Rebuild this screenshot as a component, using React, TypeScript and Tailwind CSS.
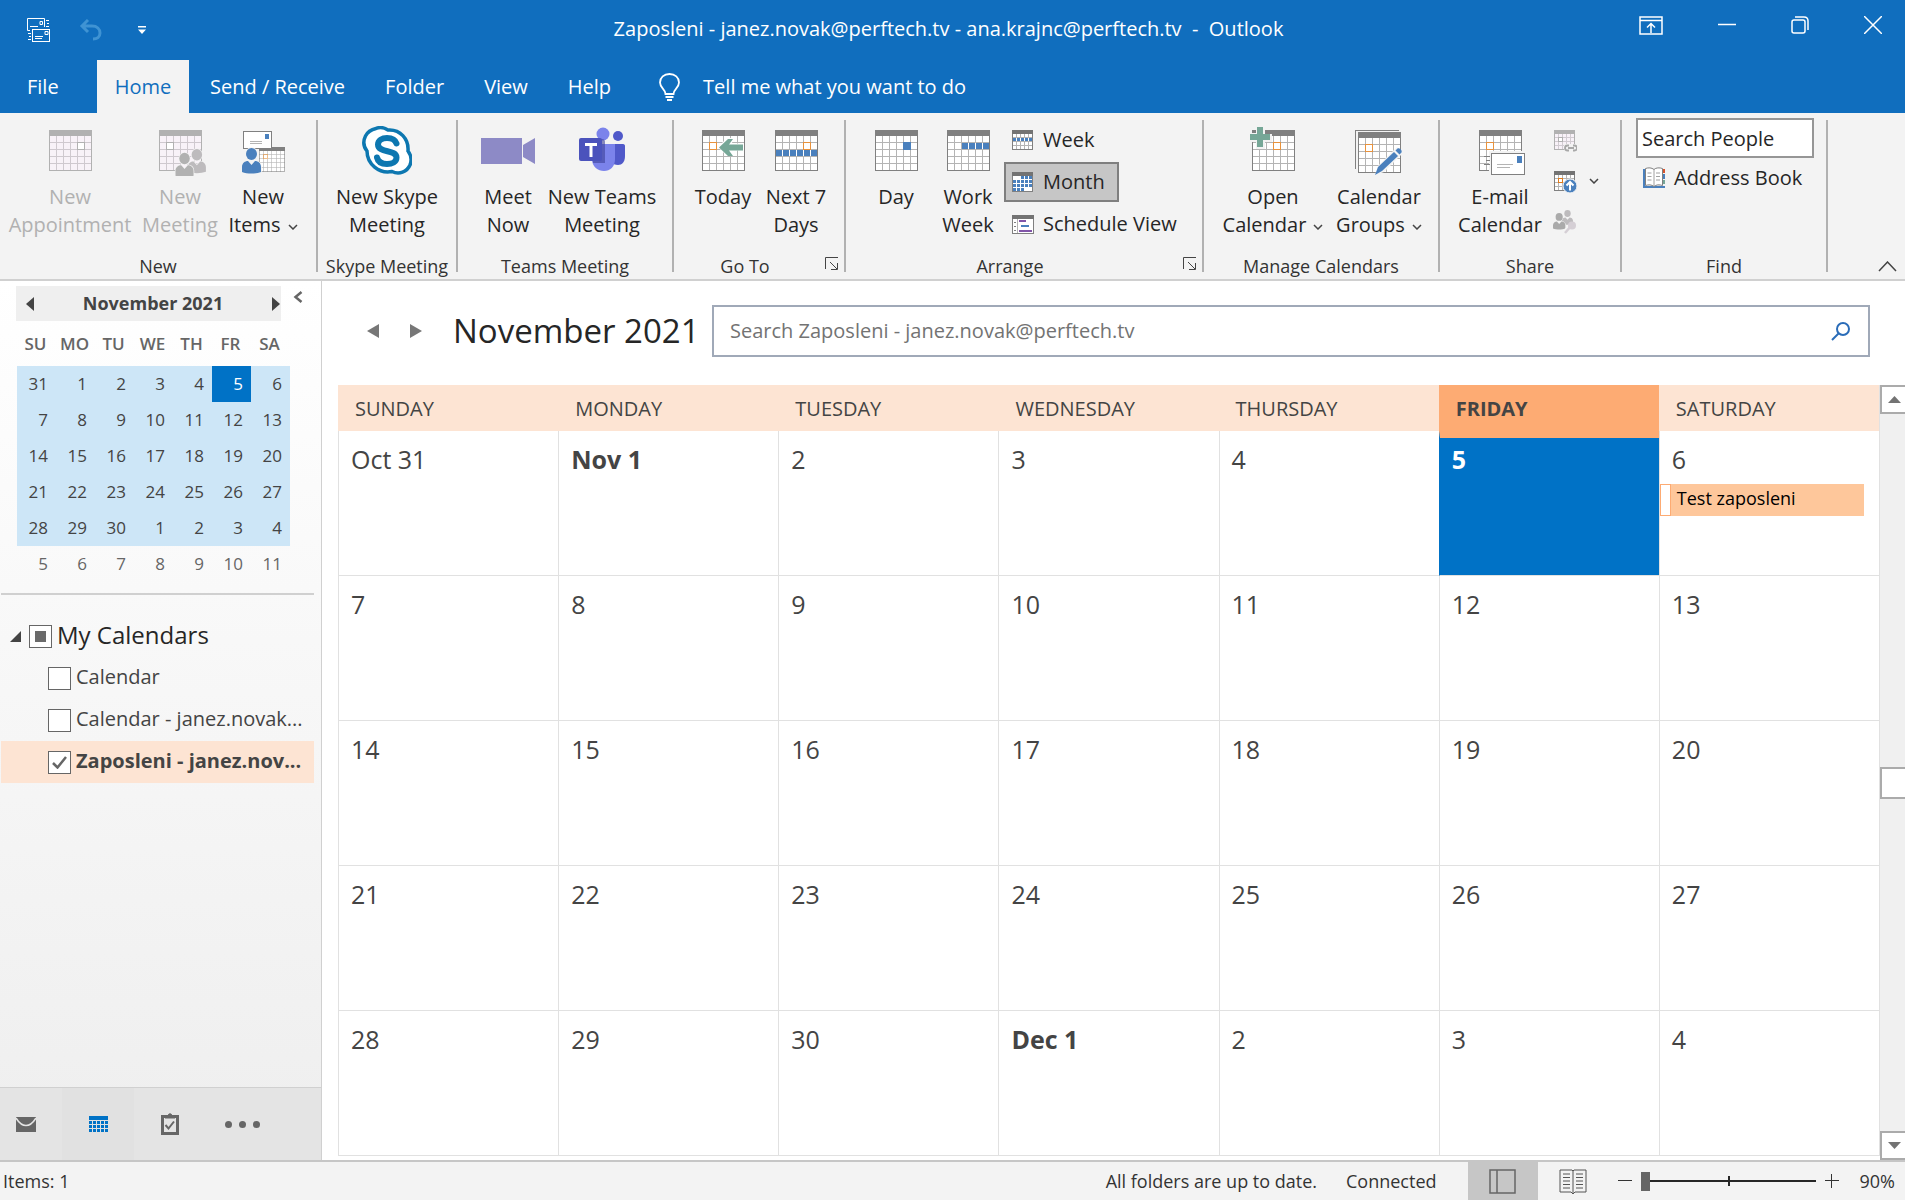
import React from 'react';
import clsx from 'clsx';

const WEEKDAYS = ['SUNDAY', 'MONDAY', 'TUESDAY', 'WEDNESDAY', 'THURSDAY', 'FRIDAY', 'SATURDAY'];
const SHORT_DAYS = ['SU', 'MO', 'TU', 'WE', 'TH', 'FR', 'SA'];

const MONTH = [
  ['Oct 31', 'Nov 1', '2', '3', '4', '5', '6'],
  ['7', '8', '9', '10', '11', '12', '13'],
  ['14', '15', '16', '17', '18', '19', '20'],
  ['21', '22', '23', '24', '25', '26', '27'],
  ['28', '29', '30', 'Dec 1', '2', '3', '4'],
];

const MINI_MONTH = [
  [31, 1, 2, 3, 4, 5, 6],
  [7, 8, 9, 10, 11, 12, 13],
  [14, 15, 16, 17, 18, 19, 20],
  [21, 22, 23, 24, 25, 26, 27],
  [28, 29, 30, 1, 2, 3, 4],
  [5, 6, 7, 8, 9, 10, 11],
];

/* ---------- icons ---------- */

type GridProps = { disabled?: boolean; children?: React.ReactNode };

// Month sheet that most of the ribbon icons are built on
const Sheet: React.FC<GridProps> = ({ disabled, children }) => (
  <g shapeRendering="crispEdges">
    <rect width="43" height="41" fill={disabled ? '#f8f2f8' : '#fff'} />
    <path
      d="M7.5 6v35M14.5 6v35M21.5 6v35M28.5 6v35M35.5 6v35M0 12.5h43M0 19.5h43M0 26.5h43M0 33.5h43"
      stroke={disabled ? '#cfc9cf' : '#b4b4b4'}
      fill="none"
    />
    <rect x=".5" y=".5" width="42" height="40" fill="none" stroke={disabled ? '#b1b1b1' : '#808080'} />
    <rect width="43" height="6" fill={disabled ? '#b1b1b1' : '#808080'} />
    {children}
  </g>
);

const Marker: React.FC<{ x: number; y?: number; color?: string }> = ({ x, y = 12, color = '#e8923c' }) => (
  <rect x={x + 0.5} y={y + 0.5} width="7" height="7" fill="#fff" stroke={color} />
);

// Row of highlighted day cells, separated by white gaps
const DayCells: React.FC<{ x: number; y: number; count: number; size: number }> = ({ x, y, count, size }) => (
  <g>
    <rect x={x} y={y} width={count * (size + 1) - 1} height={size} fill="#fff" />
    {Array.from({ length: count }, (_, i) => (
      <rect key={i} x={x + i * (size + 1)} y={y} width={size} height={size} fill="#4a80bd" />
    ))}
  </g>
);

const BigIcon: React.FC<{ children: React.ReactNode }> = ({ children }) => (
  <svg width="57" height="50" viewBox="-7 -4 57 50" aria-hidden="true">
    {children}
  </svg>
);

const SmallIcon: React.FC<{ children: React.ReactNode }> = ({ children }) => (
  <svg width="24" height="24" viewBox="0 0 24 24" aria-hidden="true" className="shrink-0">
    {children}
  </svg>
);

const SmallSheet: React.FC<GridProps> = ({ disabled, children }) => (
  <g shapeRendering="crispEdges">
    <rect x="1" y="2" width="21" height="20" fill={disabled ? '#f8f2f8' : '#fff'} />
    <path
      d="M5.5 6v16M9.5 6v16M13.5 6v16M17.5 6v16M1 9.5h21M1 13.5h21M1 17.5h21"
      stroke={disabled ? '#d2ccd2' : '#b4b4b4'}
      fill="none"
    />
    <rect x="1.5" y="2.5" width="20" height="19" fill="none" stroke={disabled ? '#b1b1b1' : '#808080'} />
    <rect x="1" y="2" width="21" height="4" fill={disabled ? '#b1b1b1' : '#737373'} />
    {children}
  </g>
);

const Person: React.FC<{ x: number; y: number; color: string; outline?: string }> = ({ x, y, color, outline = '#f3f3f3' }) => (
  <g transform={`translate(${x} ${y})`} fill={color} stroke={outline} strokeWidth="1.5" paintOrder="stroke">
    <path d="M0 24v-5c0-4 3-6 6-6l3.500 4 3.500-4c3 0 6 2 6 6v5c-5 2-14 2-19 0z" />
    <ellipse cx="9.500" cy="6" rx="5.500" ry="6" />
  </g>
);

const Chevron: React.FC = () => (
  <svg width="10" height="6" viewBox="0 0 10 6" className="inline-block" aria-hidden="true">
    <path d="M1 1l4 4 4-4" fill="none" stroke="#444" strokeWidth="1.500" />
  </svg>
);

const AppointmentIcon = () => (
  <BigIcon>
    <Sheet disabled>
      <Marker x={28} color="#b1b1b1" />
    </Sheet>
  </BigIcon>
);

const MeetingIcon = () => (
  <BigIcon>
    <Sheet disabled>
      <Marker x={7} color="#b1b1b1" />
    </Sheet>
    <g transform="translate(26 20) scale(.95)">
      <Person x={3} y={-1} color="#bdbbbd" />
      <Person x={-10} y={3} color="#b1b1b1" />
    </g>
  </BigIcon>
);

const NewItemsIcon = () => (
  <BigIcon>
    <g transform="translate(17 17) scale(.6)">
      <Sheet>
        <Marker x={7} />
      </Sheet>
    </g>
    <rect x="1.500" y="1.500" width="28" height="17" fill="#fff" stroke="#808080" />
    <rect x="23" y="4" width="4" height="5" fill="#4a80bd" />
    <path d="M8 11.500h12M8 13.500h12" stroke="#b4b4b4" />
    <Person x={0} y={18} color="#4a80bd" />
  </BigIcon>
);

const SkypeIcon = () => (
  <svg width="50" height="50" viewBox="0 0 50 50" aria-hidden="true">
    <path
      d="M14 2.500C19 .5 23 2 26 4c12-1 21 9 20 21 3 4 4 9 2 14-3 7-11 10-18 6.500C17 48 5 38 5 25 1 20 1 15 3.500 10 5.500 6 9.500 3.500 14 2.500z"
      fill="#fff"
      stroke="#0d77b0"
      strokeWidth="3.500"
    />
    <path
      d="M34.500 17.500C33 13 29 12 25 12c-5 0-9 2.200-9 6.500 0 9 18.500 4.500 18.500 13 0 4.500-4.500 6.500-9.500 6.500s-9-2-10-6.500"
      fill="none"
      stroke="#0d77b0"
      strokeWidth="6"
      strokeLinecap="round"
    />
  </svg>
);

const MeetNowIcon = () => (
  <svg width="56" height="50" viewBox="0 0 56 50" aria-hidden="true">
    <path d="M1 12h41v26H1zM43 19l12-7v26l-12-7z" fill="#8d8ac6" />
  </svg>
);

const TeamsIcon = () => (
  <svg width="48" height="50" viewBox="0 0 48 50" aria-hidden="true">
    <circle cx="40" cy="10" r="5" fill="#5059c9" />
    <path d="M33 18h12c1.500 0 2 1 2 2v10c0 6-3 9-7 9-3 0-5-1-7-3z" fill="#5059c9" />
    <circle cx="25" cy="8" r="6.500" fill="#7b83eb" />
    <path d="M15 18h22v15c0 8-5 12-11 12S14 41 14 33z" fill="#7b83eb" />
    <path d="M14 13h10c2 0 3 1 3 3v21H15z" fill="#3c4198" opacity=".6" />
    <rect x="1" y="12" width="23" height="23" rx="2" fill="#4b53bc" />
    <path d="M7 18.500h12M13 18v13" stroke="#fff" strokeWidth="3" />
  </svg>
);

const TodayIcon = () => (
  <BigIcon>
    <Sheet>
      <Marker x={7} />
    </Sheet>
    <path d="M42 13.500H29.500L33 8h-8l-9 9 9 9h8l-3.500-5.500H42z" fill="#fff" />
    <path d="M41 14.500H27L31 9h-5l-9 8.500 9 8.500h5l-4-5.500h14z" fill="#76a797" />
  </BigIcon>
);

const NextSevenIcon = () => (
  <BigIcon>
    <Sheet>
      <Marker x={28} />
      <DayCells x={1} y={20} count={6} size={6} />
    </Sheet>
  </BigIcon>
);

const DayIcon = () => (
  <BigIcon>
    <Sheet>
      <rect x="28" y="12" width="8" height="8" fill="#4a80bd" />
    </Sheet>
  </BigIcon>
);

const WorkWeekIcon = () => (
  <BigIcon>
    <Sheet>
      <DayCells x={15} y={13} count={4} size={6} />
    </Sheet>
  </BigIcon>
);

const OpenCalendarIcon = () => (
  <BigIcon>
    <Sheet>
      <Marker x={21} />
    </Sheet>
    <path d="M4-4h9v8h7v8h-7v7H4v-7h-8V3h8z" fill="#f3f3f3" />
    <path d="M5-3h6v7h7v6h-7v7H5v-7H-2V4h7z" fill="#76a797" />
  </BigIcon>
);

const CalendarGroupsIcon = () => (
  <BigIcon>
    <path d="M-2.500 39V.5H41" fill="none" stroke="#808080" shapeRendering="crispEdges" />
    <g transform="translate(0 2)">
      <Sheet>
        <Marker x={7} />
      </Sheet>
    </g>
    <path d="M17 45l3-9 19-19 6 6-19 19z" fill="#f3f3f3" />
    <path d="M17 45l3-8 16-15 4 4-16 15zM37.500 20.500l2-2c2-1 5 2 4 4l-2 2z" fill="#4a80bd" />
  </BigIcon>
);

const EmailCalendarIcon = () => (
  <BigIcon>
    <Sheet>
      <Marker x={7} />
    </Sheet>
    <g shapeRendering="crispEdges">
      <rect x="10" y="21" width="37" height="25" fill="#f3f3f3" />
      <rect x="12.500" y="23.500" width="33" height="21" fill="#fff" stroke="#808080" />
      <rect x="38" y="26" width="5" height="7" fill="#4a80bd" />
      <path d="M18 34.500h16M18 37.500h13" stroke="#b4b4b4" />
      <path d="M5 26.500h6M7 30.500h4M5 34.500h6" stroke="#808080" />
    </g>
  </BigIcon>
);

const WeekIcon = () => (
  <SmallIcon>
    <SmallSheet>
      <DayCells x={2} y={10} count={5} size={3} />
    </SmallSheet>
  </SmallIcon>
);

const MonthIcon = () => (
  <SmallIcon>
    <SmallSheet>
      <rect x="2" y="6" width="19" height="15" fill="#fff" />
      <DayCells x={10} y={6} count={3} size={3} />
      <DayCells x={2} y={10} count={5} size={3} />
      <DayCells x={2} y={14} count={5} size={3} />
      <DayCells x={2} y={18} count={3} size={3} />
    </SmallSheet>
  </SmallIcon>
);

const ScheduleIcon = () => (
  <SmallIcon>
    <g shapeRendering="crispEdges">
      <rect x="1.500" y="3.500" width="21" height="18" fill="#fff" stroke="#808080" />
      <rect x="1" y="3" width="22" height="4" fill="#737373" />
      <path d="M6.500 7v14" stroke="#b4b4b4" />
      <path d="M3 10.500h2M3 14.500h2M3 18.500h2" stroke="#808080" />
      <path d="M8 9h7M8 19h13" stroke="#8155a8" strokeWidth="2" />
      <path d="M10 14h8" stroke="#4a80bd" strokeWidth="2" />
    </g>
  </SmallIcon>
);

const ShareCalendarIcon = () => (
  <SmallIcon>
    <SmallSheet disabled>
      <rect x="5.500" y="9.500" width="4" height="4" fill="#fff" stroke="#b1b1b1" />
    </SmallSheet>
    <path d="M11 16h13v8H11z" fill="#f3f3f3" />
    <path d="M16 17.500h-1.500a2.500 2.500 0 000 5H16M20 17.500h1.500a2.500 2.500 0 010 5H20M15 20h6" fill="none" stroke="#a8a8a8" strokeWidth="1.800" />
  </SmallIcon>
);

const PublishIcon = () => (
  <SmallIcon>
    <SmallSheet>
      <rect x="5.500" y="9.500" width="4" height="4" fill="#fff" stroke="#e07b1c" />
    </SmallSheet>
    <circle cx="17" cy="17" r="7" fill="#4a80bd" stroke="#f3f3f3" />
    <path d="M17 21.500v-8M13.500 16.500L17 13l3.500 3.500" fill="none" stroke="#fff" strokeWidth="2" />
  </SmallIcon>
);

const PermissionsIcon = () => (
  <SmallIcon>
    <g transform="translate(9 0) scale(.58)">
      <Person x={0} y={0} color="#bdbbbd" />
    </g>
    <g transform="translate(0 3) scale(.65)">
      <Person x={0} y={0} color="#aaa" />
    </g>
    <path d="M18 16l-7 7" stroke="#f3f3f3" strokeWidth="5" />
    <circle cx="19" cy="15.500" r="4" fill="#d5cfd5" />
    <path d="M18 16l-6 7" stroke="#d5cfd5" strokeWidth="2.500" />
  </SmallIcon>
);

const AddressBookIcon = () => (
  <SmallIcon>
    <path d="M1 3h2v17h20v2H1z" fill="#4a80bd" />
    <path d="M3.500 2.500c3-1 6-1 8.500 1 2-2 5.500-2 8.500-1v17c-3-1-6.500-1-8.500 1-2.500-2-5.500-2-8.500-1z" fill="#fff" stroke="#808080" />
    <path d="M12 3v17M5.500 7h4M5.500 10.500h4M5.500 14h4M14 7h4M14 10.500h4M14 14h4" stroke="#a0a0a0" />
    <path d="M22 3v4" stroke="#d6532d" strokeWidth="2" />
    <path d="M22 8v5" stroke="#4a80bd" strokeWidth="2" />
    <path d="M22 14v4" stroke="#76a797" strokeWidth="2" />
  </SmallIcon>
);

const Triangle: React.FC<{ dir: 'left' | 'right'; small?: boolean; color: string }> = ({ dir, small, color }) => (
  <svg width={small ? 8 : 12} height="14" viewBox="0 0 12 14" preserveAspectRatio="none" aria-hidden="true">
    <path d={dir === 'left' ? 'M12 0v14L0 7z' : 'M0 0v14l12-7z'} fill={color} />
  </svg>
);

/* ---------- ribbon ---------- */

type BigButtonProps = {
  icon: React.ReactNode;
  lines: string[];
  width: string;
  menu?: boolean;
  disabled?: boolean;
};

const BigButton: React.FC<BigButtonProps> = ({ icon, lines, width, menu, disabled }) => (
  <button
    type="button"
    disabled={disabled}
    className={clsx('flex shrink-0 flex-col items-center pt-[6px]', width, disabled ? 'text-[#b1b1b1]' : 'text-[#262626]')}
  >
    {icon}
    <span className="mt-[7px] text-[20px] leading-7 whitespace-nowrap">
      {lines[0]}
      {lines[1] && <br />}
      {lines[1]}
      {menu && (
        <span className="mb-1 ml-[7px] inline-block align-baseline leading-none">
          <Chevron />
        </span>
      )}
    </span>
  </button>
);

type GroupProps = { label: string; width: string; launcher?: boolean; children: React.ReactNode };

const Group: React.FC<GroupProps> = ({ label, width, launcher, children }) => (
  <section className={clsx('relative flex shrink-0 flex-col border-r-2 border-[#b1b1b1]', width)} aria-label={label}>
    <div className="flex flex-1">{children}</div>
    <div className={clsx('-mb-1 text-center text-[18px] leading-5 whitespace-nowrap text-[#333]', launcher && 'pr-7')}>
      {label}
    </div>
    {launcher && (
      <button type="button" aria-label={`${label} options`} className="absolute right-[5px] bottom-px">
        <svg width="14" height="14" viewBox="0 0 14 14" fill="none" stroke="#444">
          <path d="M.5 12V.5H13M5 5l7 7M12.500 6v6.500H6" />
        </svg>
      </button>
    )}
  </section>
);

const SmallButton: React.FC<{ icon: React.ReactNode; label: string; active?: boolean }> = ({ icon, label, active }) => (
  <button
    type="button"
    aria-pressed={active}
    className={clsx(
      'flex h-10 items-center gap-2 border-2 px-[5px] pr-3 text-[20px] whitespace-nowrap text-[#262626]',
      active ? 'border-[#7f7f7f] bg-[#c6c6c6]' : 'border-transparent'
    )}
  >
    {icon}
    {label}
  </button>
);

const Ribbon: React.FC = () => (
  <div className="flex h-[168px] shrink-0 border-b-2 border-[#d0d0d0] bg-[#f3f3f3] pt-[7px] pb-[7px]">
    <Group label="New" width="w-[318px]">
      <BigButton icon={<AppointmentIcon />} lines={['New', 'Appointment']} width="w-[140px]" disabled />
      <BigButton icon={<MeetingIcon />} lines={['New', 'Meeting']} width="w-[80px]" disabled />
      <BigButton icon={<NewItemsIcon />} lines={['New', 'Items']} width="w-[86px]" menu />
    </Group>
    <Group label="Skype Meeting" width="w-[140px]">
      <BigButton icon={<SkypeIcon />} lines={['New Skype', 'Meeting']} width="w-[138px]" />
    </Group>
    <Group label="Teams Meeting" width="w-[216px]">
      <div className="flex pl-2">
        <BigButton icon={<MeetNowIcon />} lines={['Meet', 'Now']} width="w-[84px]" />
        <BigButton icon={<TeamsIcon />} lines={['New Teams', 'Meeting']} width="w-[104px]" />
      </div>
    </Group>
    <Group label="Go To" width="w-[172px]" launcher>
      <div className="flex pl-3">
        <BigButton icon={<TodayIcon />} lines={['Today']} width="w-[74px]" />
        <BigButton icon={<NextSevenIcon />} lines={['Next 7', 'Days']} width="w-[72px]" />
      </div>
    </Group>
    <Group label="Arrange" width="w-[358px]" launcher>
      <div className="flex pl-[14px]">
        <BigButton icon={<DayIcon />} lines={['Day']} width="w-[72px]" />
        <BigButton icon={<WorkWeekIcon />} lines={['Work', 'Week']} width="w-[72px]" />
        <div className="flex flex-col items-start gap-[2px]">
          <SmallButton icon={<WeekIcon />} label="Week" />
          <SmallButton icon={<MonthIcon />} label="Month" active />
          <SmallButton icon={<ScheduleIcon />} label="Schedule View" />
        </div>
      </div>
    </Group>
    <Group label="Manage Calendars" width="w-[236px]">
      <div className="flex pl-4">
        <BigButton icon={<OpenCalendarIcon />} lines={['Open', 'Calendar']} width="w-[106px]" menu />
        <BigButton icon={<CalendarGroupsIcon />} lines={['Calendar', 'Groups']} width="w-[106px]" menu />
      </div>
    </Group>
    <Group label="Share" width="w-[182px]">
      <div className="flex pl-[10px]">
        <BigButton icon={<EmailCalendarIcon />} lines={['E-mail', 'Calendar']} width="w-[100px]" />
        <div className="flex flex-col items-start pl-[3px]">
          <button type="button" disabled aria-label="Share Calendar" className="flex h-10 items-center">
            <ShareCalendarIcon />
          </button>
          <button type="button" aria-label="Publish Online" className="flex h-[42px] items-center gap-3">
            <PublishIcon />
            <Chevron />
          </button>
          <button type="button" disabled aria-label="Calendar Permissions" className="flex h-10 items-center">
            <PermissionsIcon />
          </button>
        </div>
      </div>
    </Group>
    <Group label="Find" width="w-[206px]">
      <div className="flex flex-1 flex-col pr-3 pl-[14px]">
        <input
          type="text"
          aria-label="Search People"
          placeholder="Search People"
          className="-mt-[2px] h-10 w-full border-2 border-[#969696] bg-white px-1 text-[20px] text-[#262626] placeholder:text-[#262626]"
        />
        <button type="button" className="flex h-10 items-center gap-2 pl-[6px] text-[20px] whitespace-nowrap text-[#262626]">
          <AddressBookIcon />
          Address Book
        </button>
      </div>
    </Group>
    <div className="flex flex-1 items-end justify-end pr-2">
      <button type="button" aria-label="Collapse the ribbon">
        <svg width="19" height="11" viewBox="0 0 19 11" fill="none" stroke="#444" strokeWidth="1.500">
          <path d="M1 10l8.500-9 8.500 9" />
        </svg>
      </button>
    </div>
  </div>
);

/* ---------- title bar and tabs ---------- */

const TitleBar: React.FC = () => (
  <div className="grid h-[60px] shrink-0 grid-cols-[1fr_auto_1fr] text-white">
    <div className="flex items-center pl-[27px]">
      <button type="button" aria-label="Send/Receive All Folders">
        <svg width="24" height="24" viewBox="0 0 24 24" fill="none" stroke="#fff">
          <path d="M3 12.500H.500V.500H17.500V9M13 3.500h2.500v3H13zM3 8.500h8" />
          <rect x="5.500" y="11.500" width="17" height="12" />
          <path d="M18 13.500h3v3h-3zM8 18.500h8M8 20.500h7M19 2.500h3M20 5.500h2M19 8.500h3M1 15.500h3M2 18.500h2M1 21.500h3" />
        </svg>
      </button>
      <button type="button" aria-label="Undo" disabled className="ml-7">
        <svg width="23" height="22" viewBox="0 0 23 22" fill="none" stroke="#3f93d3" strokeWidth="3">
          <path d="M9 1L3 7l6 6M3 7h10c5 0 8 3 8 7s-3 6-7 6" />
        </svg>
      </button>
      <button type="button" aria-label="Customize Quick Access Toolbar" className="ml-9">
        <svg width="8" height="8" viewBox="0 0 8 8" fill="#fff">
          <path d="M0 0h8v1.500H0zM0 3.500h8L4 8z" />
        </svg>
      </button>
    </div>
    <h1 className="self-center pr-2 pb-[3px] text-[20px] whitespace-pre">
      {'Zaposleni - janez.novak@perftech.tv - ana.krajnc@perftech.tv  -  Outlook'}
    </h1>
    <div className="flex items-center justify-end gap-[55px] pr-[23px] pb-[10px]">
      <button type="button" aria-label="Ribbon Display Options">
        <svg width="24" height="19" viewBox="0 0 24 19" fill="none" stroke="#fff" strokeWidth="1.500">
          <path d="M1 1h22v17H1zM1 4.500h22M12 17V8M8 11.500L12 7.500l4 4" />
        </svg>
      </button>
      <button type="button" aria-label="Minimize">
        <svg width="18" height="18" viewBox="0 0 18 18" stroke="#fff" strokeWidth="1.500">
          <path d="M0 8.500h18" />
        </svg>
      </button>
      <button type="button" aria-label="Restore">
        <svg width="18" height="18" viewBox="0 0 18 18" fill="none" stroke="#fff" strokeWidth="1.500">
          <rect x="1" y="4" width="13" height="13" rx="2" />
          <path d="M4 1h9c3 0 4 1 4 4v9" />
        </svg>
      </button>
      <button type="button" aria-label="Close">
        <svg width="18" height="18" viewBox="0 0 18 18" stroke="#fff" strokeWidth="1.500">
          <path d="M0 0l18 18M18 0L0 18" />
        </svg>
      </button>
    </div>
  </div>
);

const Tabs: React.FC = () => (
  <nav className="flex h-[53px] shrink-0 items-stretch text-[20px] text-white">
    <button type="button" className="w-[97px] pl-[27px] text-left">File</button>
    <button type="button" aria-current="page" className="w-[92px] bg-[#f3f3f3] text-[#106ebe]">Home</button>
    <button type="button" className="pr-5 pl-[21px]">Send / Receive</button>
    <button type="button" className="px-5">Folder</button>
    <button type="button" className="px-5">View</button>
    <button type="button" className="px-5">Help</button>
    <button type="button" className="flex items-center gap-[23px] pl-7">
      <svg width="21" height="28" viewBox="0 0 21 28" fill="none" stroke="#fff" strokeWidth="1.800">
        <path d="M6.500 21c0-5-5.500-6-5.500-11.500C1 4.500 5 1 10.500 1S20 4.500 20 9.500C20 15 14.500 16 14.500 21zM6.500 24h8M8 27h5" />
      </svg>
      Tell me what you want to do
    </button>
  </nav>
);

/* ---------- side pane ---------- */

const MiniCalendar: React.FC = () => (
  <div className="pt-[5px] pl-4">
    <div className="flex">
      <div className="flex h-[35px] w-[265px] items-center justify-between bg-[#efefef] pr-px pl-[10px]">
        <button type="button" aria-label="Previous month">
          <Triangle dir="left" small color="#444" />
        </button>
        <span className="text-[18px] font-bold text-[#444]">November 2021</span>
        <button type="button" aria-label="Next month">
          <Triangle dir="right" small color="#444" />
        </button>
      </div>
      <button type="button" aria-label="Minimize the folder pane" className="ml-3 self-start pt-[5px]">
        <svg width="10" height="12" viewBox="0 0 10 12" fill="none" stroke="#666" strokeWidth="2.500">
          <path d="M8.500 1l-6 5 6 5" />
        </svg>
      </button>
    </div>
    <table className="ml-px w-[273px] table-fixed border-separate border-spacing-0 text-right text-[17px] text-[#444]">
      <thead>
        <tr className="h-[45px]">
          {SHORT_DAYS.map((day) => (
            <th key={day} className="p-0 pr-[2px] text-center font-semibold text-[#666]">{day}</th>
          ))}
        </tr>
      </thead>
      <tbody>
        {MINI_MONTH.map((week, row) => (
          <tr key={row} className={clsx('h-9', row < 5 ? 'bg-[#cde6f7]' : 'text-[#666]')}>
            {week.map((day, col) => (
              <td key={col} className={clsx('p-0 pr-2', row === 0 && day === 5 && 'bg-[#0072c6] text-white')}>
                {day}
              </td>
            ))}
          </tr>
        ))}
      </tbody>
    </table>
  </div>
);

const CALENDARS = [
  { id: 'cal', name: 'Calendar', checked: false },
  { id: 'cal-janez', name: 'Calendar - janez.novak...', checked: false },
  { id: 'zaposleni', name: 'Zaposleni - janez.nov...', checked: true },
];

const CheckBox: React.FC<{ id: string; checked?: boolean; mixed?: boolean }> = ({ id, checked, mixed }) => (
  <span className="relative flex size-[23px] shrink-0">
    <input
      id={id}
      type="checkbox"
      defaultChecked={checked}
      className="size-[23px] appearance-none border border-[#666] bg-white"
    />
    {checked && (
      <svg width="15" height="13" viewBox="0 0 15 13" className="pointer-events-none absolute top-[5px] left-1">
        <path d="M1 7l4.500 4.500L14 1" fill="none" stroke="#666" strokeWidth="2.500" />
      </svg>
    )}
    {mixed && <span className="pointer-events-none absolute inset-[6px] bg-[#6a6a6a]" />}
  </span>
);

const CalendarList: React.FC = () => (
  <div className="mr-[7px] ml-px border-t-2 border-[#d0d0d0] pt-5">
    <div className="flex h-[42px] items-center pl-[9px]">
      <svg width="11" height="11" viewBox="0 0 11 11" aria-hidden="true">
        <path d="M11 0v11H0z" fill="#444" />
      </svg>
      <span className="ml-2">
        <CheckBox id="my-calendars" mixed />
      </span>
      <label htmlFor="my-calendars" className="ml-[5px] pb-[2px] text-[24px] text-[#262626]">My Calendars</label>
    </div>
    {CALENDARS.map((cal) => (
      <div key={cal.id} className={clsx('flex h-[42px] items-center pl-[47px]', cal.checked && 'bg-[#fde4d3] font-bold')}>
        <CheckBox id={cal.id} checked={cal.checked} />
        <label htmlFor={cal.id} className="ml-[5px] pb-[2px] text-[20px] whitespace-nowrap text-[#444]">{cal.name}</label>
      </div>
    ))}
  </div>
);

const NavBar: React.FC = () => (
  <nav className="mt-auto flex h-[73px] border-t border-[#d0d0d0] bg-[#e4e4e4]">
    <button type="button" aria-label="Mail" className="flex w-[62px] items-center pl-4">
      <svg width="20" height="15" viewBox="0 0 20 15">
        <rect width="20" height="15" fill="#666" />
        <path d="M0 1c6 10 14 10 20 0" fill="none" stroke="#e4e4e4" strokeWidth="1.500" />
      </svg>
    </button>
    <button type="button" aria-label="Calendar" className="flex w-[72px] items-center justify-center bg-[#e1e1e1]">
      <svg width="19" height="16" viewBox="0 0 19 16" shapeRendering="crispEdges">
        <rect width="19" height="4" fill="#0072c6" />
        <path d="M0 6.500h19M0 10.500h19M0 14.500h19" stroke="#0072c6" strokeWidth="3" strokeDasharray="3 1" />
      </svg>
    </button>
    <button type="button" aria-label="Tasks" className="flex w-[72px] items-center justify-center">
      <svg width="18" height="22" viewBox="0 0 18 22" fill="none" stroke="#666">
        <rect x="1.500" y="3.500" width="15" height="17" strokeWidth="3" />
        <path d="M4 5V3h3c0-3 4-3 4 0h3v2z" fill="#666" />
        <path d="M4.500 12l3 3.500 5.500-7" strokeWidth="2" />
      </svg>
    </button>
    <button type="button" aria-label="More" className="flex w-[72px] items-center justify-center gap-[7px]">
      <span className="size-[7px] rounded-full bg-[#666]" />
      <span className="size-[7px] rounded-full bg-[#666]" />
      <span className="size-[7px] rounded-full bg-[#666]" />
    </button>
  </nav>
);

/* ---------- month view ---------- */

const MonthView: React.FC = () => (
  <table className="h-full w-full table-fixed border-separate border-spacing-0 border-r border-[#e1e1e1] text-left text-[#444]">
    <thead>
      <tr className="h-[46px]">
        {WEEKDAYS.map((day) => (
          <th
            key={day}
            className={clsx('p-0 pt-[2px] pl-[17px] text-[20px]', day === 'FRIDAY' ? 'bg-[#fdab73] font-bold' : 'bg-[#fde4d3] font-normal')}
          >
            {day}
          </th>
        ))}
      </tr>
    </thead>
    <tbody>
      {MONTH.map((week, row) => (
        <tr key={row} className="h-1/5">
          {week.map((day, col) => {
            const today = row === 0 && day === '5';
            return (
              <td
                key={col}
                className={clsx(
                  'border-b border-l border-[#e1e1e1] p-0 align-top',
                  today && 'border-t-[7px] border-t-[#fdab73] border-l-[#0072c6] bg-[#0072c6] text-white'
                )}
              >
                <div
                  className={clsx(
                    'pl-3 text-[25px] leading-8',
                    today ? 'pt-[5px]' : 'pt-3',
                    (today || day.length > 2) && day !== 'Oct 31' && 'font-bold'
                  )}
                >
                  {day}
                </div>
                {row === 0 && day === '6' && (
                  <button type="button" className="mt-[9px] flex h-8 w-[calc(100%-15px)] bg-[#fec79b] text-left text-[18px] leading-7 text-black">
                    <span className="h-full w-[11px] border border-[#fdab73] bg-white" />
                    <span className="pl-[6px]">Test zaposleni</span>
                  </button>
                )}
              </td>
            );
          })}
        </tr>
      ))}
    </tbody>
  </table>
);

const ScrollBar: React.FC = () => (
  <div className="flex w-[25px] shrink-0 flex-col justify-between overflow-hidden bg-[#f0f0f0]">
    <button type="button" aria-label="Scroll up" className="flex h-[29px] w-7 items-center justify-center border-2 border-[#ababab] bg-white">
      <svg width="13" height="7" viewBox="0 0 13 7">
        <path d="M0 7l6.500-7L13 7z" fill="#737373" />
      </svg>
    </button>
    <div className="mt-5 h-8 w-7 border-2 border-[#ababab] bg-white" />
    <button type="button" aria-label="Scroll down" className="flex h-[29px] w-7 items-center justify-center border-2 border-[#ababab] bg-white">
      <svg width="13" height="7" viewBox="0 0 13 7">
        <path d="M0 0h13L6.500 7z" fill="#737373" />
      </svg>
    </button>
  </div>
);

const CalendarPane: React.FC = () => (
  <main className="flex min-w-0 flex-1 flex-col bg-white">
    <div className="flex items-center pt-6 pr-[35px] pl-[45px]">
      <button type="button" aria-label="Back">
        <Triangle dir="left" color="#777" />
      </button>
      <button type="button" aria-label="Forward" className="ml-[31px]">
        <Triangle dir="right" color="#777" />
      </button>
      <h2 className="ml-[31px] w-[259px] text-[33px] leading-[44px] whitespace-nowrap text-[#262626]">November 2021</h2>
      <div className="flex h-[52px] flex-1 items-center border-2 border-[#a0a9b8] pr-[17px] pl-4">
        <input
          type="search"
          aria-label="Search calendar"
          placeholder="Search Zaposleni - janez.novak@perftech.tv"
          className="flex-1 text-[20px] outline-none placeholder:text-[#737373]"
        />
        <button type="button" aria-label="Search">
          <svg width="20" height="20" viewBox="0 0 20 20" fill="none" stroke="#2a6cb8" strokeWidth="2">
            <circle cx="12" cy="8" r="6" />
            <path d="M7.500 12.500L1 19" />
          </svg>
        </button>
      </div>
    </div>
    <div className="mt-7 flex min-h-0 flex-1">
      <div className="min-w-0 flex-1 pb-1 pl-4">
        <MonthView />
      </div>
      <ScrollBar />
    </div>
  </main>
);

const StatusBar: React.FC = () => (
  <footer className="flex h-10 shrink-0 items-center border-t-2 border-[#c6c6c6] bg-[#f3f3f3] text-[18px] text-[#333]">
    <span className="pl-[3px]">Items: 1</span>
    <span className="ml-auto">All folders are up to date.</span>
    <span className="ml-[29px]">Connected</span>
    <button type="button" aria-label="Normal view" className="ml-[31px] flex h-full w-[70px] items-center justify-center bg-[#c6c6c6]">
      <svg width="27" height="25" viewBox="0 0 27 25" fill="none" stroke="#666" strokeWidth="1.500">
        <path d="M1 1h25v23H1zM8 1v23" />
      </svg>
    </button>
    <button type="button" aria-label="Reading view" className="flex h-full w-[70px] items-center justify-center">
      <svg width="28" height="25" viewBox="0 0 28 25" fill="none" stroke="#555">
        <path d="M13 1H1v22h11l2 2 2-2h11V1H15l-1 1zM14 2v22M4 5h7M4 8.500h7M4 12h7M4 15.500h7M4 19h7M17 5h7M17 8.500h7M17 12h7M17 15.500h7M17 19h7" />
      </svg>
    </button>
    <button type="button" aria-label="Zoom out" className="ml-[10px]">
      <svg width="14" height="14" viewBox="0 0 14 14" stroke="#333">
        <path d="M0 6.500h14" />
      </svg>
    </button>
    <div className="relative ml-[9px] flex h-5 w-[175px] items-center">
      <span className="absolute left-1/2 h-[10px] w-[2px] bg-[#262626]" />
      <input
        type="range"
        aria-label="Zoom"
        min="90"
        max="290"
        defaultValue="90"
        className="relative h-[2px] w-full appearance-none bg-[#262626] [&::-webkit-slider-thumb]:h-[19px] [&::-webkit-slider-thumb]:w-[9px] [&::-webkit-slider-thumb]:appearance-none [&::-webkit-slider-thumb]:bg-[#666]"
      />
    </div>
    <button type="button" aria-label="Zoom in" className="ml-[9px]">
      <svg width="14" height="14" viewBox="0 0 14 14" stroke="#333">
        <path d="M0 6.500h14M6.500 0v14" />
      </svg>
    </button>
    <span className="ml-[21px] pr-[10px]">90%</span>
  </footer>
);

const App: React.FC = () => (
  <div className="flex h-screen flex-col overflow-hidden bg-white font-['Open_Sans',sans-serif]">
    <header className="bg-[#106ebe]">
      <TitleBar />
      <Tabs />
    </header>
    <Ribbon />
    <div className="flex min-h-0 flex-1">
      <aside className="flex w-[322px] shrink-0 flex-col border-r border-[#d0d0d0] bg-linear-to-b from-white to-[#eeeeee]">
        <MiniCalendar />
        <div className="mt-[11px]">
          <CalendarList />
        </div>
        <NavBar />
      </aside>
      <CalendarPane />
    </div>
    <StatusBar />
  </div>
);

export default App;
